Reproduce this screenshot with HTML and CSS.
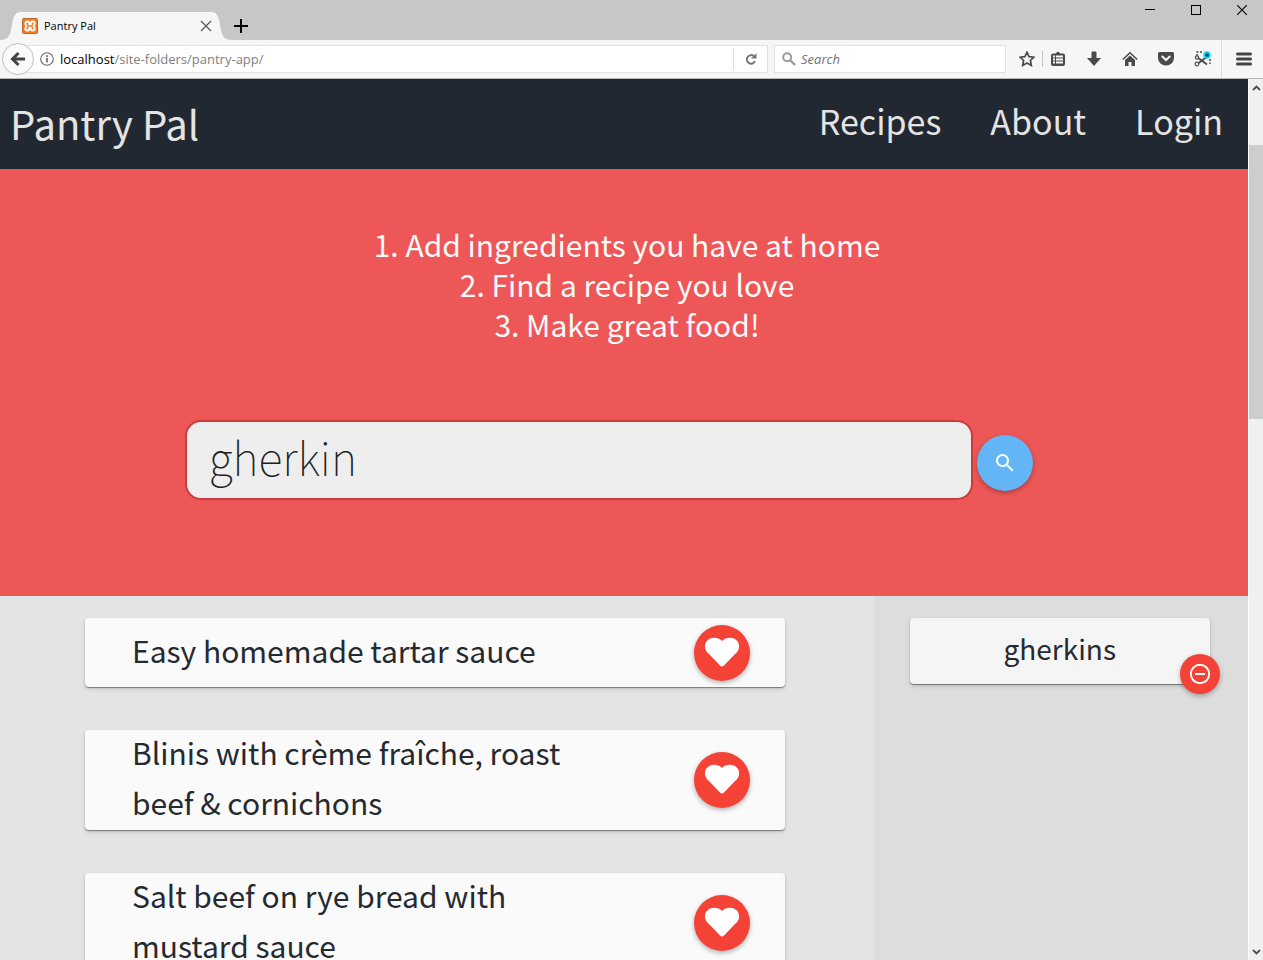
FILE: index.html
```html
<!DOCTYPE html>
<html lang="en">
<head>
<meta charset="utf-8">
<title>Pantry Pal</title>
<link rel="stylesheet" href="styles.css">
</head>
<body>
<div class="browser">
  <div class="tabbar">
    <div class="tab">
      <svg class="tab-edge" width="20" height="28" viewBox="0 0 20 28"><path d="M0 28C8 28 10 24 11.500 16C13 5 15 0 20 0V28Z" fill="#f6f6f6"/></svg>
      <div class="tab-body">
        <svg width="16" height="16" viewBox="0 0 16 16"><rect x=".5" y=".5" width="15" height="15" rx="1" fill="#f47b20" stroke="#b96a32"/><path d="M5.300 3.500a2 2 0 0 0-2 2c0 1 .7 1.600 1.200 2.500c-.5.9-1.200 1.500-1.200 2.500a2 2 0 0 0 4 0V9.700h1.400v.8a2 2 0 0 0 4 0c0-1-.7-1.600-1.200-2.500c.5-.9 1.200-1.500 1.200-2.500a2 2 0 0 0-4 0v.8h-1.400v-.8a2 2 0 0 0-2-2Z" fill="none" stroke="#fff" stroke-width="1.900"/></svg>
        <span class="tab-title">Pantry Pal</span>
        <button class="plain" aria-label="Close tab"><svg width="12" height="12" viewBox="0 0 12 12"><path d="M1 1l10 10M11 1L1 11" stroke="#555" stroke-width="1.200"/></svg></button>
      </div>
      <svg class="tab-edge" width="20" height="28" viewBox="0 0 20 28"><path d="M20 28C12 28 10 24 8.500 16C7 5 5 0 0 0V28Z" fill="#f6f6f6"/></svg>
    </div>
    <button class="plain new-tab" aria-label="New tab"><svg width="14" height="14" viewBox="0 0 14 14"><path d="M7 0v14M0 7h14" stroke="#000" stroke-width="2"/></svg></button>
    <div class="window-controls">
      <button class="plain" aria-label="Minimize"><svg width="10" height="10" viewBox="0 0 10 10"><path d="M0 4.500h10" stroke="#000"/></svg></button>
      <button class="plain" aria-label="Maximize"><svg width="10" height="10" viewBox="0 0 10 10"><rect x=".5" y=".5" width="9" height="9" fill="none" stroke="#000"/></svg></button>
      <button class="plain" aria-label="Close"><svg width="10" height="10" viewBox="0 0 10 10"><path d="M0 0l10 10M10 0L0 10" stroke="#000" stroke-width="1.100"/></svg></button>
    </div>
  </div>

  <div class="toolbar">
    <button class="back" aria-label="Back"><svg width="16" height="16" viewBox="0 0 16 16"><path d="M8.500 2L2.500 8l6 6M3 8h12" fill="none" stroke="#444" stroke-width="3"/></svg></button>
    <div class="address">
      <svg width="14" height="14" viewBox="0 0 14 14"><circle cx="7" cy="7" r="6.300" fill="none" stroke="#666" stroke-width="1.100"/><path d="M7 6v4.500M7 3.300v1.600" stroke="#555" stroke-width="1.500"/></svg>
      <div class="url" role="textbox" aria-label="Address" contenteditable="true" spellcheck="false">localhost<span class="path">/site-folders/pantry-app/</span></div>
      <button class="plain reload" aria-label="Reload"><svg width="12" height="12" viewBox="0 0 12 12"><path d="M9 3.100A4.300 4.300 0 1 0 10.100 8.200" fill="none" stroke="#777" stroke-width="1.900"/><path d="M11.500 0v5.500H6Z" fill="#777"/></svg></button>
    </div>
    <label class="searchbar">
      <svg width="14" height="14" viewBox="0 0 14 14"><circle cx="5.200" cy="5.200" r="4" fill="none" stroke="#999" stroke-width="1.900"/><path d="M8 8l5 5" stroke="#999" stroke-width="2.400"/></svg>
      <input type="text" placeholder="Search" aria-label="Search the web">
    </label>
    <div class="tools">
      <button class="plain" aria-label="Bookmark"><svg width="16" height="16" viewBox="0 0 16 16"><path d="M8 1.200l2.100 4.400 4.800.6-3.500 3.300.9 4.900L8 12l-4.300 2.400.9-4.900L1.100 6.200l4.800-.6Z" fill="none" stroke="#4a4a4a" stroke-width="1.700"/></svg></button>
      <button class="plain marks" aria-label="Bookmarks list"><svg width="16" height="16" viewBox="0 0 16 16"><path d="M3 2.500h2.500L8 .5l2.500 2H13A2 2 0 0 1 15 4.500V13a2 2 0 0 1-2 2H3a2 2 0 0 1-2-2V4.500a2 2 0 0 1 2-2Z" fill="#4a4a4a"/><path d="M3 5.500h2M6 5.500h7M3 8.500h2M6 8.500h7M3 11.500h2M6 11.500h7" stroke="#f6f6f6" stroke-width="1.800"/></svg></button>
      <button class="plain" aria-label="Downloads"><svg width="16" height="16" viewBox="0 0 16 16"><path d="M5.500 1.500q0-1 1-1h3q1 0 1 1V7H15L8 15 1 7h4.500Z" fill="#4a4a4a"/></svg></button>
      <button class="plain" aria-label="Home"><svg width="16" height="16" viewBox="0 0 16 16"><path d="M.8 8.500L8 1.800l7.200 6.700" fill="none" stroke="#4a4a4a" stroke-width="1.500"/><path d="M3 9l5-4.600L13 9v6H9.500v-4h-3v4H3Z" fill="#4a4a4a"/></svg></button>
      <button class="plain" aria-label="Pocket"><svg width="16" height="16" viewBox="0 0 16 16"><path d="M1.500 1h13Q16 1 16 2.500V7a8 7.500 0 0 1-16 0V2.500Q0 1 1.500 1Z" fill="#4a4a4a"/><path d="M4.300 5.500L8 9l3.700-3.500" fill="none" stroke="#f6f6f6" stroke-width="2" stroke-linecap="round"/></svg></button>
      <button class="plain" aria-label="Screen capture"><svg width="18" height="16" viewBox="0 0 18 16"><path d="M3 5V1h6M16 8v5" fill="none" stroke="#4a4a4a" stroke-width="1.500" stroke-dasharray="2 1.500"/><path d="M3.500 6.500L13 13.500M4 12.500L12 6.500" stroke="#4a4a4a" stroke-width="1.800"/><circle cx="3" cy="6.500" r="1.600" fill="#f6f6f6" stroke="#4a4a4a" stroke-width="1.200"/><circle cx="3" cy="13" r="1.800" fill="#f6f6f6" stroke="#4a4a4a" stroke-width="1.200"/><circle cx="13" cy="4" r="3.800" fill="#00e5f5"/><path d="M13 1.800v4.400M11 2.900l4 2.200M15 2.900l-4 2.200" stroke="#126" stroke-width="1"/></svg></button>
    </div>
    <button class="plain menu" aria-label="Menu"><svg width="16" height="14" viewBox="0 0 16 14"><path d="M1.500 2h13M1.500 7h13M1.500 12h13" stroke="#444" stroke-width="3" stroke-linecap="round"/></svg></button>
  </div>

  <div class="viewport">
    <div class="page">
      <header class="site-header">
        <a class="brand" href="#">Pantry Pal</a>
        <nav class="site-nav"><a href="#">Recipes</a><a href="#">About</a><a href="#">Login</a></nav>
      </header>
      <section class="hero">
        <p class="steps">1. Add ingredients you have at home<br>2. Find a recipe you love<br>3. Make great food!</p>
        <form class="finder">
          <input type="text" value="gherkin" aria-label="Ingredient">
          <button class="fab blue" type="button" aria-label="Find"><svg width="24" height="24" viewBox="0 0 24 24"><path fill="#fff" d="M15.500 14h-.79l-.28-.27A6.470 6.470 0 0 0 16 9.500 6.500 6.500 0 1 0 9.500 16c1.610 0 3.090-.59 4.230-1.570l.27.28v.79l5 4.990L20.490 19l-4.990-5zm-6 0C7.010 14 5 11.990 5 9.500S7.010 5 9.500 5 14 7.010 14 9.500 11.990 14 9.500 14z"/></svg></button>
        </form>
      </section>
      <div class="results">
        <main class="recipes">
          <article class="card"><h2>Easy homemade tartar sauce</h2><button class="fab" aria-label="Save recipe"><svg width="36" height="32" viewBox="0 0 36 32"><path class="heart" d="M18 4C15 .7 10 .2 6 1.500C1.500 3.500 0 8.500 1.500 12.500C2.500 15 4 16 5.500 17.500L16 28.500Q18 30.500 20 28.500L30.500 17.500C32 16 33.500 15 34.500 12.500C36 8.500 34.500 3.500 30 1.500C26 .2 21 .7 18 4Z"/></svg></button></article>
          <article class="card"><h2>Blinis with crème fraîche, roast beef &amp; cornichons</h2><button class="fab" aria-label="Save recipe"><svg width="36" height="32" viewBox="0 0 36 32"><path class="heart" d="M18 4C15 .7 10 .2 6 1.500C1.500 3.500 0 8.500 1.500 12.500C2.500 15 4 16 5.500 17.500L16 28.500Q18 30.500 20 28.500L30.500 17.500C32 16 33.500 15 34.500 12.500C36 8.500 34.500 3.500 30 1.500C26 .2 21 .7 18 4Z"/></svg></button></article>
          <article class="card"><h2>Salt beef on rye bread with mustard sauce</h2><button class="fab" aria-label="Save recipe"><svg width="36" height="32" viewBox="0 0 36 32"><path class="heart" d="M18 4C15 .7 10 .2 6 1.500C1.500 3.500 0 8.500 1.500 12.500C2.500 15 4 16 5.500 17.500L16 28.500Q18 30.500 20 28.500L30.500 17.500C32 16 33.500 15 34.500 12.500C36 8.500 34.500 3.500 30 1.500C26 .2 21 .7 18 4Z"/></svg></button></article>
        </main>
        <aside class="pantry">
          <div class="ingredient">gherkins
            <button class="fab small" aria-label="Remove gherkins"><svg width="24" height="24" viewBox="0 0 24 24"><circle cx="12" cy="12" r="9.200" fill="none" stroke="#fff" stroke-width="1.900"/><path d="M7 12h10" stroke="#fff" stroke-width="2"/></svg></button>
          </div>
        </aside>
      </div>
    </div>
    <div class="scrollbar">
      <svg width="9" height="6" viewBox="0 0 9 6"><path d="M1 5l3.500-3.500L8 5" fill="none" stroke="#505050" stroke-width="1.900"/></svg>
      <div class="track"><div class="thumb"></div></div>
      <svg width="9" height="6" viewBox="0 0 9 6"><path d="M1 1l3.500 3.500L8 1" fill="none" stroke="#505050" stroke-width="1.900"/></svg>
    </div>
  </div>
</div>
</body>
</html>
```
FILE: styles.css
```css
* { box-sizing: border-box; }
body { margin: 0; font-family: "Noto Sans CJK SC", sans-serif; color: #252a30; }
a { color: inherit; text-decoration: none; }
svg { display: block; flex: none; }
button { font: inherit; }
.plain { display: flex; align-items: center; justify-content: center; padding: 0; border: 0; background: none; }

.browser { display: flex; flex-direction: column; height: 100vh; overflow: hidden; }

.tabbar { display: flex; align-items: flex-end; flex: none; height: 40px; background: #c7c7c7; font-family: "Open Sans", sans-serif; }
.tab { display: flex; height: 28px; }
.tab-body { display: flex; align-items: center; gap: 6px; width: 192px; padding: 0 0 0 2px; background: #f6f6f6; color: #000; }
.tab-title { flex: 1; padding-bottom: 2px; font-size: 11px; }
.new-tab { height: 28px; margin-left: 2px; }
.window-controls { display: flex; gap: 36px; align-self: flex-start; margin-left: auto; padding: 5px 16px 0 0; }

.toolbar { display: flex; align-items: center; flex: none; height: 39px; padding-left: 2px; background: #f6f6f6; border-bottom: 1px solid #b8b8b8; font-family: "Open Sans", sans-serif; font-size: 13px; }
.back { position: relative; z-index: 1; display: flex; align-items: center; justify-content: center; width: 32px; height: 32px; padding: 0; border: 1px solid #c0c0c0; border-radius: 50%; background: #fafafa; }
.address { display: flex; align-items: center; flex: 1; height: 28px; margin-left: -12px; padding-left: 17px; background: #fff; border: 1px solid #e2e2e2; }
.url { flex: 1; margin-left: 6px; color: #000; outline: 0; }
.path { color: #808080; }
.reload { width: 34px; height: 22px; border-left: 1px solid #ddd; }
.searchbar { display: flex; align-items: center; gap: 5px; width: 232px; height: 28px; margin-left: 6px; padding-left: 7px; background: #fff; border: 1px solid #e2e2e2; }
.searchbar input { flex: 1; min-width: 0; padding: 0; border: 0; background: none; font: inherit; }
.searchbar input::placeholder { color: #707070; font-style: italic; }
.tools { display: flex; gap: 20px; padding: 0 9px 0 13px; }
.tools .marks { margin: 0 0 0 -5px; padding: 0; }
.marks { position: relative; }
.marks::before { content: ""; position: absolute; left: -8px; top: 0; width: 1px; height: 16px; background: #c4c4c4; }
.menu { height: 38px; padding: 0 11px 0 14px; border-left: 1px solid #ddd; }

.viewport { display: flex; flex: 1; min-height: 0; }
.page { display: flex; flex-direction: column; flex: 1; min-width: 0; overflow: hidden; }

.site-header { display: flex; align-items: center; justify-content: space-between; flex: none; height: 90px; padding: 0 25px 2px 10px; background: #222831; color: #e4e4e4; }
.brand { font-size: 40px; line-height: 60px; }
.site-nav { display: flex; gap: 49px; padding-bottom: 4px; font-size: 34px; line-height: 50px; }

.hero { flex: none; padding: 55px 0 96px; background: #ee5757; }
.steps { margin: 0; padding-left: 6px; color: #fafafa; font-size: 30px; line-height: 40px; text-align: center; }
.finder { display: flex; align-items: center; gap: 4px; width: 68%; margin: 76px auto 0 14.8%; }
.finder input { flex: 1; min-width: 0; height: 80px; padding: 0 22px 8px; border: 2px solid #c93c3d; border-radius: 16px; background: #eee; color: #212121; font: 100 45px "Noto Sans CJK SC", sans-serif; outline: 0; }

.fab { display: flex; align-items: center; justify-content: center; flex: none; width: 56px; height: 56px; padding: 0; border: 0; border-radius: 50%; background: #f44336; box-shadow: 0 2px 5px rgba(0, 0, 0, .3); }
.fab.blue { margin-top: 6px; background: #64b5f6; }
.fab.small { position: absolute; right: -10px; bottom: -10px; width: 40px; height: 40px; }
.heart { fill: #fff; }

.results { display: grid; grid-template-columns: 70% 30%; flex: 1 0 auto; }
.recipes { display: flex; flex-direction: column; gap: 43px; padding: 22px 89px 43px 85px; background: #e4e4e4; }
.card { display: flex; align-items: center; justify-content: space-between; min-height: 69px; padding: 0 35px 0 47px; border-radius: 4px; background: #fafafa; box-shadow: 0 1px 1px rgba(0, 0, 0, .4), 0 2px 4px rgba(0, 0, 0, .15); }
.card h2 { width: 450px; margin: -3px 0 3px; font-size: 30px; font-weight: 400; line-height: 50px; }
.pantry { padding: 22px 38px 22px 36px; background: #ddd; }
.ingredient { position: relative; padding-bottom: 6px; border-radius: 4px; background: #f5f5f5; font-size: 28px; line-height: 60px; text-align: center; box-shadow: 0 1px 1px rgba(0, 0, 0, .4), 0 2px 4px rgba(0, 0, 0, .15); }

.scrollbar { display: flex; flex-direction: column; align-items: center; flex: none; width: 15px; padding: 6px 0 5px; border-left: 1px solid #fff; background: #f0f0f0; }
.track { flex: 1; width: 100%; margin: 5px 0; }
.thumb { height: 32.3%; margin-top: 49px; background: #cdcdcd; }
```
